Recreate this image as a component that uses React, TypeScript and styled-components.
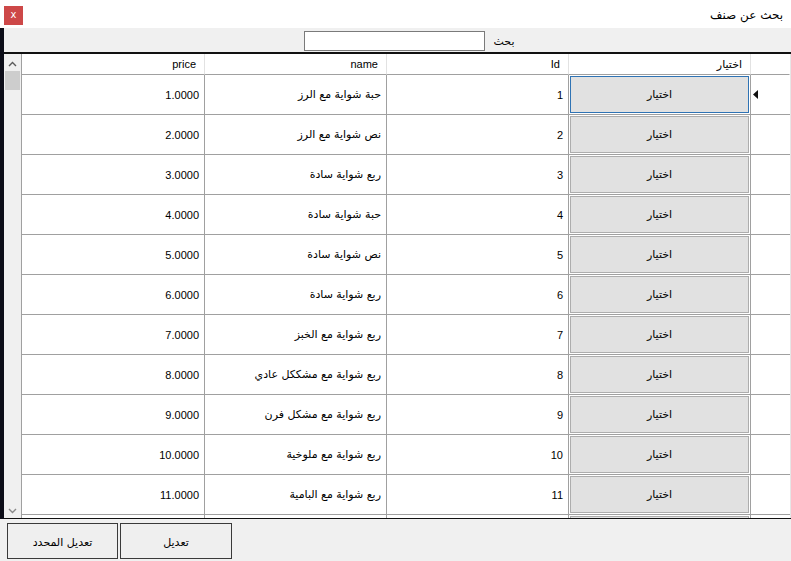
import React from 'react'
import styled, { createGlobalStyle } from 'styled-components'

const GlobalStyle = createGlobalStyle`
  html, body {
    margin: 0;
    padding: 0;
    background: #ffffff;
  }
  body {
    font-family: 'Liberation Sans', 'DejaVu Sans', sans-serif;
    font-size: 11px;
    color: #000;
  }
`

const lineColor = '#a0a0a0'

const Window = styled.div`
  width: 791px;
  height: 561px;
  display: flex;
  flex-direction: column;
  background: #fff;
  overflow: hidden;
`

const TitleBar = styled.div`
  height: 28px;
  flex: none;
  display: flex;
  align-items: center;
  justify-content: space-between;
  padding: 0 8px 0 4px;
  box-sizing: border-box;
`

const CloseButton = styled.div`
  width: 19px;
  height: 19px;
  margin-top: 2px;
  background: #cd4848;
  color: #fff;
  font-family: 'DejaVu Sans', sans-serif;
  font-size: 10px;
  line-height: 18px;
  text-align: center;
`

const Title = styled.div`
  font-family: 'DejaVu Sans', sans-serif;
  font-size: 12px;
  direction: rtl;
  margin-top: 2px;
`

const Main = styled.div`
  flex: 1;
  display: flex;
  flex-direction: column;
  border-left: 4px solid #0c0d18;
  min-height: 0;
`

const SearchBar = styled.div`
  height: 24px;
  flex: none;
  background: #f0f0f0;
  display: flex;
  align-items: center;
  justify-content: center;
  gap: 9px;
  padding-left: 42px;
`

const SearchInput = styled.input`
  width: 181px;
  height: 20px;
  box-sizing: border-box;
  border: 1px solid #7a7a7a;
  background: #fff;
  outline: none;
  margin-top: 2px;
`

const SearchLabel = styled.span`
  font-family: 'DejaVu Sans', sans-serif;
  font-size: 11px;
  width: 40px;
  margin-top: 3px;
`

const GridFrame = styled.div`
  flex: 1;
  display: flex;
  border-top: 2px solid #111;
  border-bottom: 1px solid #111;
  min-height: 0;
  overflow: hidden;
`

const ScrollBar = styled.div`
  width: 17px;
  flex: none;
  background: #f0f0f0;
  display: flex;
  flex-direction: column;
  align-items: center;
  padding-top: 2px;
  box-sizing: border-box;
`

const ScrollArrow = styled.div`
  height: 15px;
  display: flex;
  align-items: center;
  justify-content: center;
`

const ScrollThumb = styled.div`
  width: 15px;
  height: 19px;
  background: #cdcdcd;
`

const ScrollTrack = styled.div`
  flex: 1;
`

const Table = styled.div`
  flex: 1;
  display: grid;
  grid-template-columns: 183px 182px 182px 182px 1fr;
  grid-auto-rows: 40px;
  grid-template-rows: 21px;
  border-left: 1px solid ${lineColor};
  border-right: 1px solid #e6e6e6;
  align-content: start;
`

const HeaderCell = styled.div<{ $last?: boolean }>`
  display: flex;
  align-items: center;
  justify-content: flex-start;
  padding-right: 8px;
  border-bottom: 1px solid ${lineColor};
  border-right: 1px solid ${p => (p.$last ? 'transparent' : '#e2e2e2')};
  direction: rtl;
`

const Cell = styled.div`
  display: flex;
  align-items: center;
  justify-content: flex-end;
  padding-right: 5px;
  border-bottom: 1px solid ${lineColor};
  border-right: 1px solid ${lineColor};
  white-space: nowrap;
`

const ArabicText = styled.span`
  font-family: 'DejaVu Sans', sans-serif;
  font-size: 11px;
  direction: rtl;
`

const ButtonCell = styled.div`
  padding: 1px;
  border-bottom: 1px solid ${lineColor};
  border-right: 1px solid ${lineColor};
  display: flex;
`

const PickButton = styled.button<{ $focused?: boolean }>`
  flex: 1;
  height: 37px;
  background: #e1e1e1;
  border: 1px solid ${p => (p.$focused ? '#2f73b4' : '#adadad')};
  font-family: 'DejaVu Sans', sans-serif;
  font-size: 11px;
  color: #000;
  padding: 0;
`

const RowHeader = styled.div`
  border-bottom: 1px solid ${lineColor};
  display: flex;
  align-items: center;
  padding-left: 2px;
`

const Footer = styled.div`
  height: 42px;
  flex: none;
  background: #f0f0f0;
  display: flex;
  align-items: flex-start;
  gap: 2px;
  padding: 4px 0 0 7px;
  box-sizing: border-box;
`

const FooterButton = styled.button<{ $width: number }>`
  width: ${p => p.$width}px;
  height: 36px;
  background: #efefef;
  border: 1px solid #3a3a3a;
  font-family: 'DejaVu Sans', sans-serif;
  font-size: 11px;
  color: #000;
  padding: 2px 0 0;
  white-space: nowrap;
  direction: rtl;
`

const items: [number, string][] = [
  [1, 'حبة شواية مع الرز'],
  [2, 'نص شواية مع الرز'],
  [3, 'ربع شواية سادة'],
  [4, 'حبة شواية سادة'],
  [5, 'نص شواية سادة'],
  [6, 'ربع شواية سادة'],
  [7, 'ربع شواية مع الخبز'],
  [8, 'ربع شواية مع مشككل عادي'],
  [9, 'ربع شواية مع مشكل فرن'],
  [10, 'ربع شواية مع ملوخية'],
  [11, 'ربع شواية مع البامية'],
  [12, 'ربع شواية مع الفاصوليا'],
]

const Chevron = ({ up }: { up?: boolean }) => (
  <svg width="9" height="6" viewBox="0 0 9 6">
    <path
      d={up ? 'M1 5 L4.5 1.5 L8 5' : 'M1 1 L4.5 4.5 L8 1'}
      fill="none"
      stroke={up ? '#5a5a5a' : '#8a8a8a'}
      strokeWidth="1.4"
    />
  </svg>
)

const RowPointer = () => (
  <svg width="6" height="9" viewBox="0 0 6 9">
    <path d="M0 4.5 L5 0 L5 9 Z" fill="#111" />
  </svg>
)

export default function App() {
  return <>
    <GlobalStyle />
    <Window>
      <TitleBar>
        <CloseButton>x</CloseButton>
        <Title>بحث عن صنف</Title>
      </TitleBar>
      <Main>
        <SearchBar>
          <SearchInput />
          <SearchLabel>بحث</SearchLabel>
        </SearchBar>
        <GridFrame>
          <ScrollBar>
            <ScrollArrow><Chevron up /></ScrollArrow>
            <ScrollThumb />
            <ScrollTrack />
            <ScrollArrow><Chevron /></ScrollArrow>
          </ScrollBar>
          <Table>
            <HeaderCell>price</HeaderCell>
            <HeaderCell>name</HeaderCell>
            <HeaderCell>Id</HeaderCell>
            <HeaderCell><ArabicText>اختيار</ArabicText></HeaderCell>
            <HeaderCell $last />
            {items.map(([id, name], i) => (
              <React.Fragment key={id}>
                <Cell>{id}.0000</Cell>
                <Cell><ArabicText>{name}</ArabicText></Cell>
                <Cell>{id}</Cell>
                <ButtonCell>
                  <PickButton $focused={i === 0}>اختيار</PickButton>
                </ButtonCell>
                <RowHeader>{i === 0 && <RowPointer />}</RowHeader>
              </React.Fragment>
            ))}
          </Table>
        </GridFrame>
      </Main>
      <Footer>
        <FooterButton $width={111}>تعديل المحدد</FooterButton>
        <FooterButton $width={112}>تعديل</FooterButton>
      </Footer>
    </Window>
  </>
}
